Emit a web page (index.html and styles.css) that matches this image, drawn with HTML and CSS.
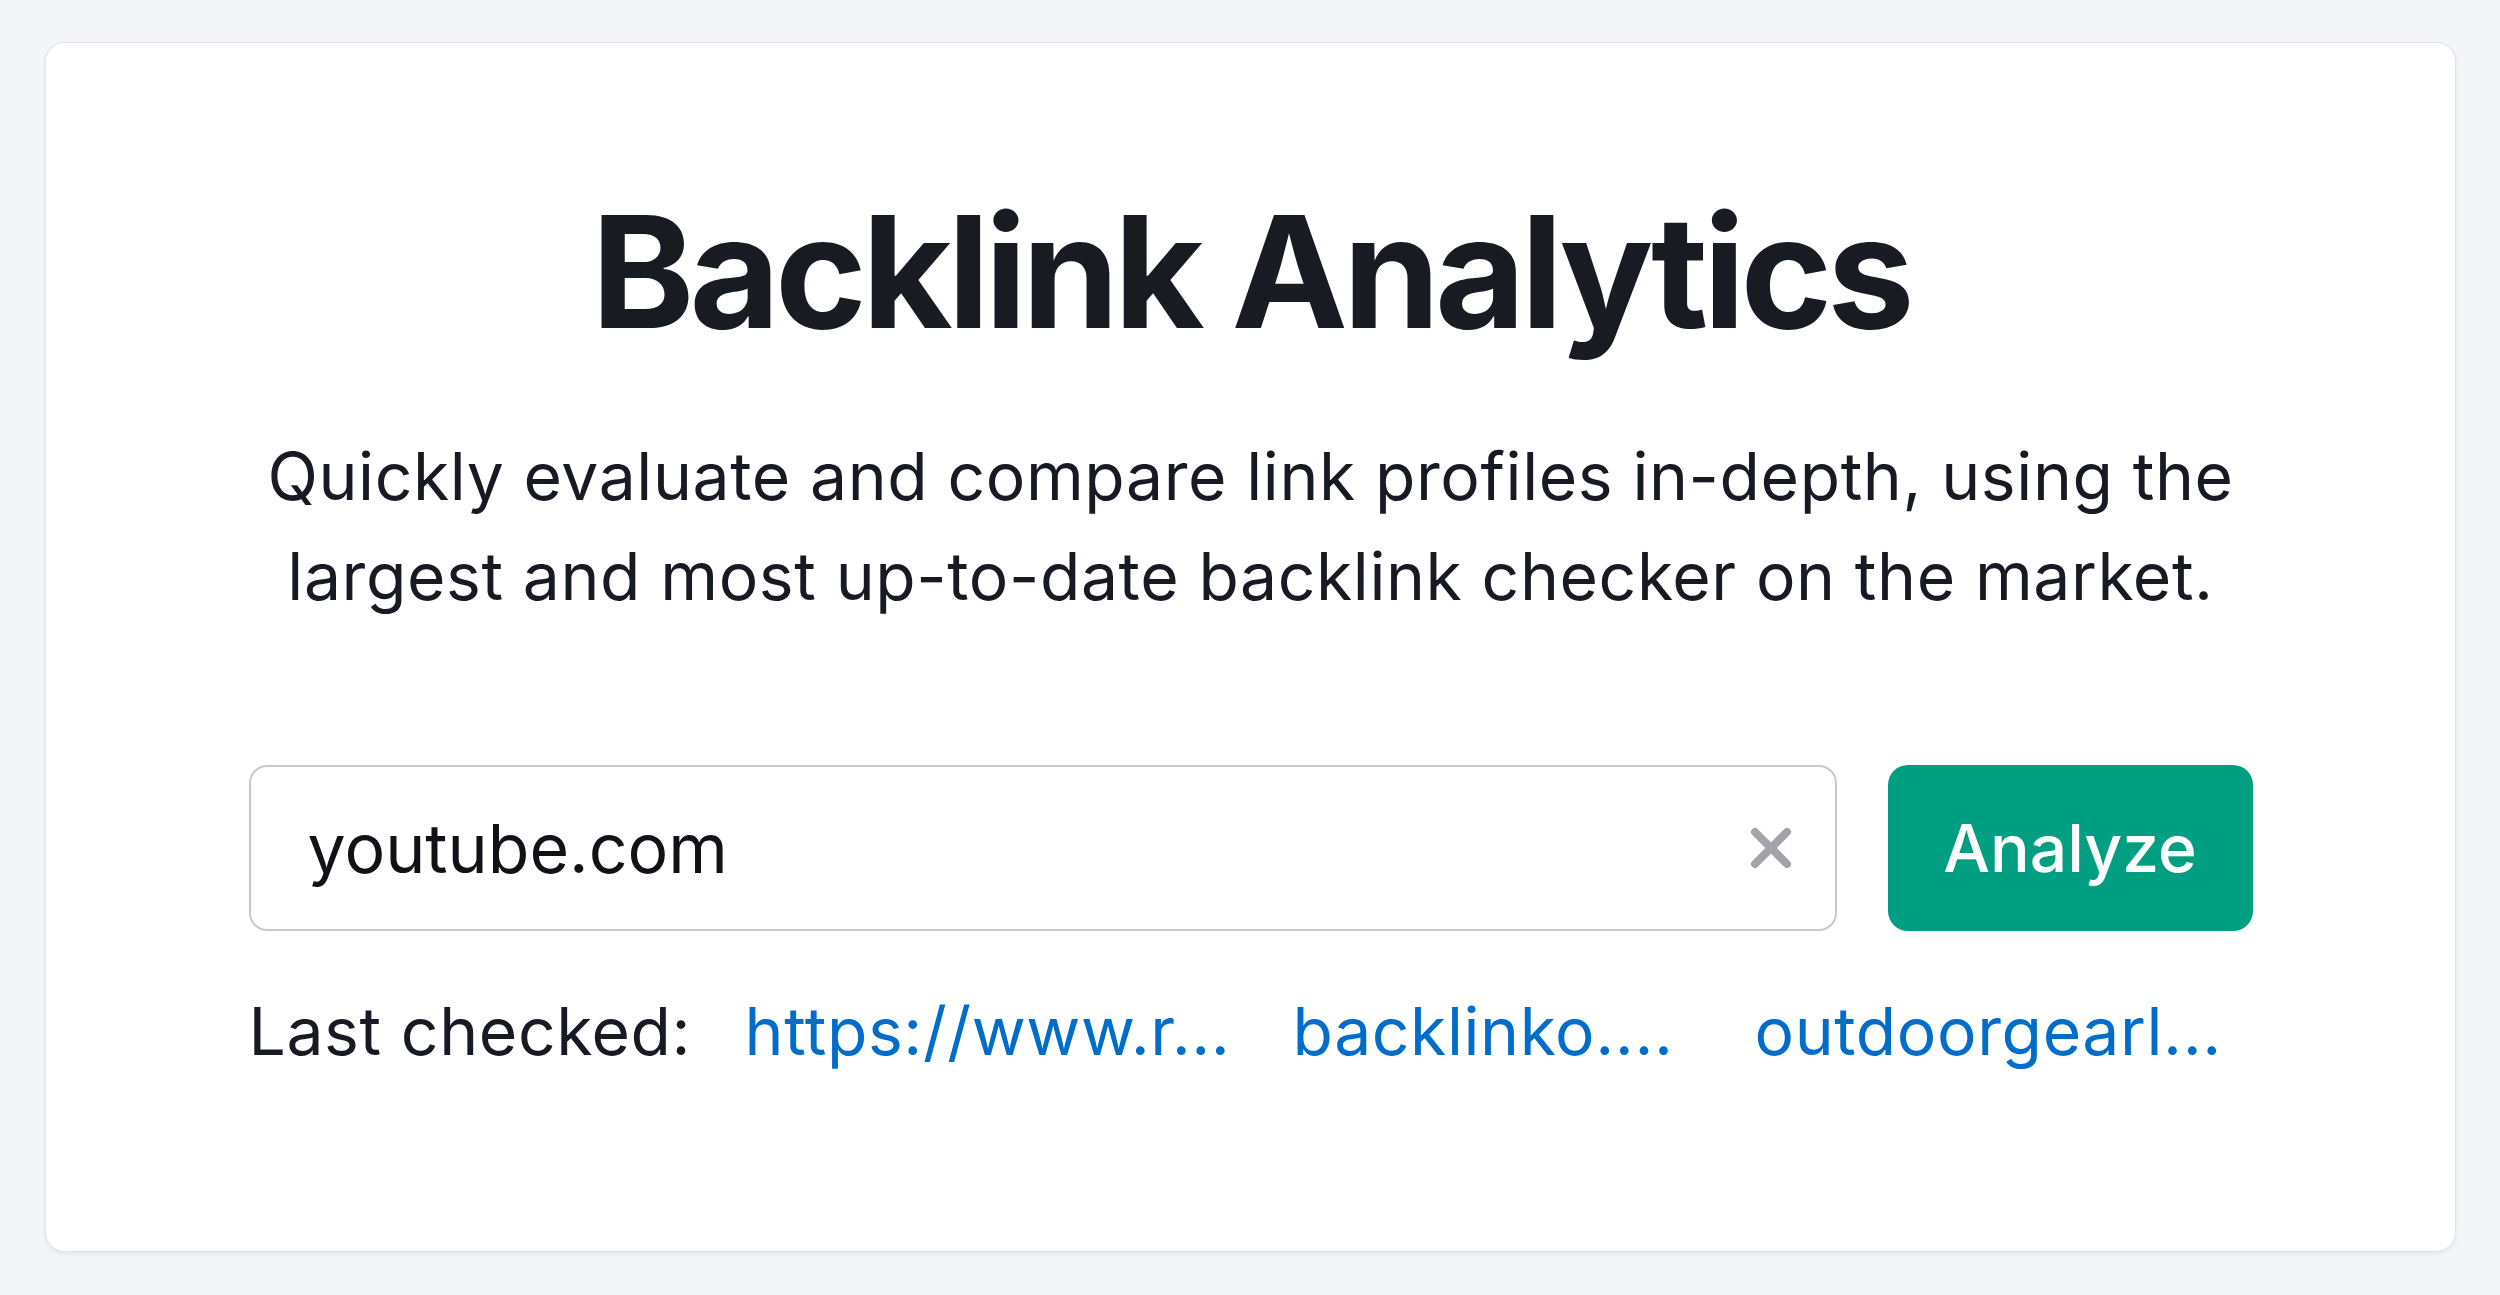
FILE: index.html
```html
<!DOCTYPE html>
<html lang="en">
<head>
<meta charset="utf-8">
<title>Backlink Analytics</title>
<link rel="stylesheet" href="styles.css">
</head>
<body>
  <main class="card">
    <div class="content">
      <h1 class="title">Backlink Analytics</h1>
      <p class="subtitle">Quickly evaluate and compare link profiles in-depth, using the<br>largest and most up-to-date backlink checker on the market.</p>
      <form class="search">
        <div class="field">
          <span class="field-value">youtube.com</span>
          <button type="button" class="clear" aria-label="Clear">
            <svg viewBox="0 0 44 44" width="44" height="44" aria-hidden="true">
              <path d="M6 6 L38 38 M38 6 L6 38" stroke="#a2a3a8" stroke-width="8" stroke-linecap="round" fill="none"/>
            </svg>
          </button>
        </div>
        <button type="button" class="analyze">Analyze</button>
      </form>
      <div class="recent">
        <span class="recent-label">Last checked:</span>
        <a class="recent-link link-1" href="#">https://www.r...</a>
        <a class="recent-link link-2" href="#">backlinko....</a>
        <a class="recent-link link-3" href="#">outdoorgearl...</a>
      </div>
    </div>
  </main>
</body>
</html>
```

FILE: styles.css
```css
* {
  box-sizing: border-box;
}

html, body {
  margin: 0;
  padding: 0;
}

body {
  background: #f4f5f9;
  padding: 42px 44px 43px 45px;
  font-family: Inter, "Noto Sans", sans-serif;
  color: #171a22;
}

.card {
  height: 1210px;
  background: #ffffff;
  border: 1px solid #e2e3e9;
  border-radius: 20px;
  box-shadow: 0 2px 5px rgba(30, 35, 60, 0.07);
  padding-top: 135px;
}

.content {
  width: 2004px;
  margin: 0 auto;
  display: flex;
  flex-direction: column;
  align-items: center;
}

.title {
  margin: 0;
  font-size: 156px;
  line-height: 188px;
  font-weight: 700;
  letter-spacing: -5px;
  color: #191b23;
  text-align: center;
}

.subtitle {
  margin: 60px 0 0;
  font-size: 66px;
  line-height: 100px;
  font-weight: 400;
  letter-spacing: 0.6px;
  text-align: center;
  color: #171a22;
}

.search {
  margin-top: 139px;
  width: 100%;
  display: flex;
  gap: 51px;
  height: 166px;
}

.field {
  flex: 1;
  display: flex;
  align-items: center;
  border: 2px solid #c5c8cf;
  border-radius: 18px;
  padding: 0 42px 0 57px;
}

.field-value {
  flex: 1;
  font-size: 68px;
  color: #101217;
}

.clear {
  border: 0;
  background: none;
  padding: 0;
  width: 44px;
  height: 44px;
  display: flex;
}

.analyze {
  width: 365px;
  border: 0;
  border-radius: 20px;
  background: #009f81;
  color: #ffffff;
  font-family: Inter, "Noto Sans", sans-serif;
  font-size: 66px;
  font-weight: 500;
}

.recent {
  margin-top: 60px;
  width: 100%;
  display: flex;
  font-size: 66px;
  line-height: 80px;
  letter-spacing: 0.6px;
}

.recent-label {
  color: #171a22;
  width: 496px;
}

.recent-link {
  color: #006dca;
  text-decoration: none;
  white-space: nowrap;
}

.link-1 {
  width: 548px;
}

.link-2 {
  width: 462px;
}
```
